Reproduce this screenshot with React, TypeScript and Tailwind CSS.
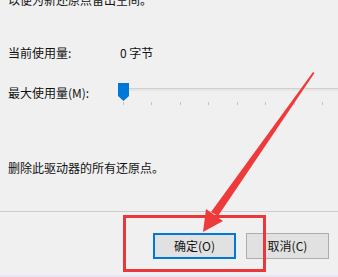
import React from "react";

const ticks = [0, 1, 2, 3, 4, 5, 6, 7];

export default function App() {
  return (
    <div className="relative w-[338px] h-[277px] overflow-hidden bg-[#f0f0f0] text-[12px] leading-[16px] text-[#111] font-['Noto_Sans_CJK_SC','Noto_Sans',sans-serif] flex flex-col">
      <div className="pl-[8px] flex flex-col">
        <div className="-mt-[8px] h-[16px] whitespace-nowrap">以便为新还原点留出空间。</div>
        <div className="mt-[37px] flex h-[16px]">
          <div className="w-[112px]">当前使用量:</div>
          <div>0 字节</div>
        </div>
        <div className="mt-[22px] flex h-[22px]">
          <div className="w-[110px] pt-[2px] whitespace-nowrap">最大使用量(M):</div>
          <div className="relative flex-1 h-[22px]">
            <div className="absolute left-[2px] right-0 top-[5px] h-[3px] bg-[#e6e6e6] border-t border-[#cfcfcf]" />
            <div className="absolute left-[5px] w-[200px] top-[19px] h-[3px] flex justify-between">
              {ticks.map((t) => (
                <div key={t} className="w-px h-[3px] bg-[#c4c4c4]" />
              ))}
            </div>
            <svg className="absolute left-0 top-0" width="11" height="18" viewBox="0 0 11 18">
              <path d="M0 0 H11 V13 L5.5 18 L0 13 Z" fill="#0078d7" />
            </svg>
          </div>
        </div>
        <div className="mt-[55px] h-[16px] whitespace-nowrap">删除此驱动器的所有还原点。</div>
      </div>
      <div className="mt-[35px] border-t border-[#cdcdcd] flex-1 flex justify-end items-start pt-[21px] pr-[9px] gap-[10px] border-b-2 border-b-[#ebe6f4]">
        <button className="w-[83px] h-[26px] bg-[#e1e1e1] border-2 border-[#0078d7] flex items-center justify-center text-[12px] text-[#111]">
          确定(O)
        </button>
        <button className="w-[83px] h-[26px] bg-[#e1e1e1] border border-[#adadad] flex items-center justify-center text-[12px] text-[#111]">
          取消(C)
        </button>
      </div>
      <svg className="absolute inset-0 pointer-events-none" width="338" height="277" viewBox="0 0 338 277">
        <rect x="124.5" y="216.5" width="140" height="54" fill="none" stroke="#e8383a" strokeWidth="3" />
        <polygon points="313,72 314.5,73 218,216 211,212" fill="#ee3a3a" />
        <polygon points="203,232 206,209 223,221" fill="#ee3a3a" />
      </svg>
    </div>
  );
}
